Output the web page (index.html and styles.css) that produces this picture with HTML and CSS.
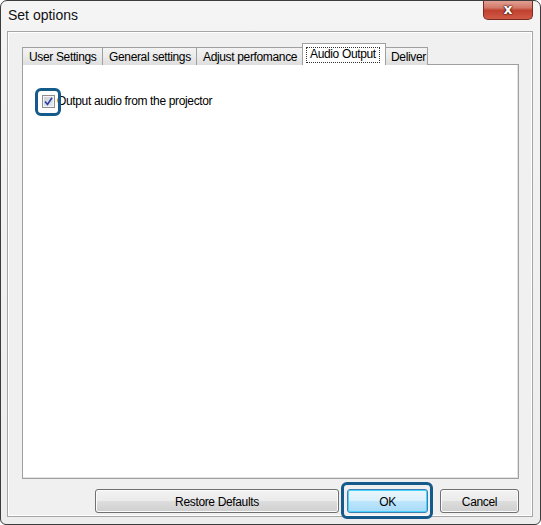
FILE: index.html
```html
<!DOCTYPE html>
<html>
<head>
<meta charset="utf-8">
<link rel="stylesheet" href="styles.css">
</head>
<body>
<div class="window">
  <div class="titlebar">
    <span class="title">Set options</span>
    <div class="close"><span>x</span></div>
  </div>
  <div class="client">
    <div class="tabs">
      <div class="tab t1">User Settings</div>
      <div class="tab t2">General settings</div>
      <div class="tab t3">Adjust perfomance</div>
      <div class="tab active"><span class="focus">Audio Output</span></div>
      <div class="tab t5">Deliver</div>
    </div>
    <div class="panel">
      <label class="row">
        <span class="cbwrap">
          <span class="checkbox">
            <svg width="9" height="9" viewBox="0 0 9 9"><path d="M1 4.5 L3.5 7.5 L8 0.8" fill="none" stroke="#2b3fa8" stroke-width="1.6"/></svg>
          </span>
          <span class="hl hl-cb"></span>
        </span>
        <span class="label">Output audio from the projector</span>
      </label>
    </div>
    <div class="buttons">
      <div class="btn restore">Restore Defaults</div>
      <div class="okwrap">
        <div class="btn ok">OK</div>
        <span class="hl hl-ok"></span>
      </div>
      <div class="btn cancel">Cancel</div>
    </div>
  </div>
</div>
</body>
</html>
```
FILE: styles.css
```css
html, body {
  margin: 0;
  padding: 0;
  background: #ffffff;
}
body {
  font-family: "Liberation Sans", Arial, sans-serif;
  font-size: 12px;
  letter-spacing: -0.35px;
  color: #000;
}
.window {
  width: 541px;
  height: 525px;
  box-sizing: border-box;
  border: 1px solid #3c3c3c;
  border-radius: 7px 7px 6px 6px;
  background: linear-gradient(180deg, #f4f4f4 0%, #ededed 100%);
  display: flex;
  flex-direction: column;
  overflow: hidden;
}
.titlebar {
  height: 30px;
  display: flex;
  align-items: flex-start;
  justify-content: space-between;
}
.title {
  font-size: 14px;
  letter-spacing: 0;
  margin: 6px 0 0 7px;
  color: #111;
  text-shadow: 0 0 4px #ffffff;
}
.close {
  width: 50px;
  height: 20px;
  margin: -1px 7px 0 0;
  box-sizing: border-box;
  border: 1px solid #7a2a22;
  border-top: none;
  border-radius: 0 0 5px 5px;
  background: linear-gradient(180deg, #e3a598 0%, #d27a6a 40%, #c1412f 55%, #cf5a45 100%);
  display: flex;
  align-items: center;
  justify-content: center;
}
.close span {
  font-family: "DejaVu Sans", sans-serif;
  font-weight: bold;
  font-size: 14px;
  line-height: 14px;
  letter-spacing: 0;
  color: #fff;
  margin-top: -2px;
  text-shadow: 0 0 1px #3a0a05, 0 0 1px #3a0a05, 0 0 2px #3a0a05;
}
.client {
  flex: 1;
  margin: 0 7px 7px 6px;
  border: 1px solid #a6a6a6;
  box-shadow: inset 0 0 0 1px #ffffff;
  background: #f0f0f0;
  padding: 12px 13px 3px 14px;
  display: flex;
  flex-direction: column;
}
.tabs {
  display: flex;
  align-items: flex-end;
  height: 21px;
  position: relative;
  z-index: 2;
}
.tab {
  height: 18px;
  box-sizing: border-box;
  border: 1px solid #a0a0a0;
  border-bottom: none;
  background: linear-gradient(180deg, #f3f3f3 0%, #ebebeb 50%, #dedede 100%);
  padding: 2px 4px 0 6px;
  margin-right: -1px;
  white-space: nowrap;
  line-height: 15px;
  overflow: hidden;
}
.tab.t1 { width: 81px; }
.tab.t2 { width: 95px; }
.tab.t3 { width: 109px; }
.tab.t5 { width: 44px; }
.tab.active {
  height: 22px;
  margin: 0 -2px 0 -2px;
  background: #ffffff;
  position: relative;
  z-index: 3;
  padding: 3px 3px 0 3px;
  width: 84px;
}
.focus {
  display: inline-block;
  border: 1px dotted #333;
  padding: 0 3px 1px 3px;
  line-height: 13px;
}
.panel {
  flex: 1;
  margin-top: -1px;
  background: #ffffff;
  border: 1px solid #a0a0a0;
  box-shadow: inset -1px -1px 0 #e3e3e3;
  padding: 30px 19px 0 19px;
  display: flex;
  flex-direction: column;
}
.row {
  display: flex;
  align-items: center;
  height: 13px;
}
.cbwrap {
  position: relative;
  width: 13px;
  height: 13px;
  margin-right: 2px;
}
.checkbox {
  display: flex;
  align-items: center;
  justify-content: center;
  width: 13px;
  height: 13px;
  box-sizing: border-box;
  border: 1px solid #8e8f8f;
  background: linear-gradient(135deg, #cbcfd5 0%, #e8ebee 100%);
  box-shadow: inset 0 0 0 1px #f4f4f4;
}
.hl {
  position: absolute;
  border: 3px solid #155a8a;
  border-radius: 6px;
  box-sizing: border-box;
  pointer-events: none;
}
.hl-cb {
  left: -7px;
  top: -7px;
  width: 26px;
  height: 28px;
}
.label {
  line-height: 13px;
  white-space: nowrap;
}
.buttons {
  display: flex;
  justify-content: flex-end;
  margin-top: 10px;
  height: 24px;
}
.btn {
  height: 24px;
  box-sizing: border-box;
  border: 1px solid #707070;
  border-radius: 3px;
  background: linear-gradient(180deg, #f2f2f2 0%, #ebebeb 50%, #dddddd 51%, #cfcfcf 100%);
  box-shadow: inset 0 0 0 1px #fbfbfb;
  display: flex;
  align-items: center;
  justify-content: center;
  padding-top: 1px;
}
.restore { width: 244px; margin-right: 8px; }
.okwrap { position: relative; margin-right: 12px; }
.ok {
  width: 81px;
  border-color: #3c7fb1;
  background: linear-gradient(180deg, #eaf6fd 0%, #d9f0fc 50%, #bee6fd 51%, #a7d9f5 100%);
  box-shadow: inset 0 0 0 1px #48d2fd;
}
.hl-ok {
  left: -6px;
  top: -7px;
  width: 92px;
  height: 37px;
}
.cancel { width: 79px; }
```
